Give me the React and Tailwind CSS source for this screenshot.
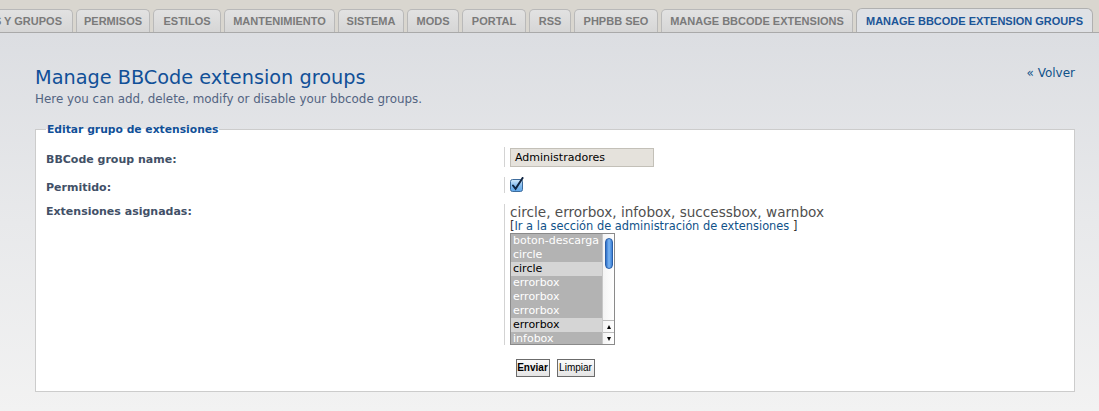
import React from 'react';

const tabs = [
  { label: 'USUARIOS Y GRUPOS', w: 'w-[150px]', clip: true },
  { label: 'PERMISOS', w: 'w-[74px]' },
  { label: 'ESTILOS', w: 'w-[68px]' },
  { label: 'MANTENIMIENTO', w: 'w-[111px]' },
  { label: 'SISTEMA', w: 'w-[66px]' },
  { label: 'MODS', w: 'w-[52px]' },
  { label: 'PORTAL', w: 'w-[64px]' },
  { label: 'RSS', w: 'w-[42px]' },
  { label: 'PHPBB SEO', w: 'w-[84px]' },
  { label: 'MANAGE BBCODE EXTENSIONS', w: 'w-[192px]' },
];

const options = [
  { label: 'boton-descarga', sel: true },
  { label: 'circle', sel: true },
  { label: 'circle', sel: false },
  { label: 'errorbox', sel: true },
  { label: 'errorbox', sel: true },
  { label: 'errorbox', sel: true },
  { label: 'errorbox', sel: false },
  { label: 'infobox', sel: true },
];

const CheckedBox = () => (
  <svg width="14" height="15" viewBox="0 0 14 15">
    <defs>
      <linearGradient id="cbfill" x1="0" y1="0" x2="0" y2="1">
        <stop offset="0" stopColor="#d6ebfc" />
        <stop offset="0.5" stopColor="#86bdef" />
        <stop offset="1" stopColor="#5ea6ea" />
      </linearGradient>
    </defs>
    <rect x="0.5" y="2.5" width="12" height="12" rx="2" fill="url(#cbfill)" stroke="#3e6c9c" />
    <path d="M3 8.5 L5.6 11.8 L12.6 1" stroke="#0f2441" strokeWidth="2" fill="none" strokeLinecap="round" />
  </svg>
);

const ListBox = () => (
  <div className="mt-[1px] flex w-[105px] h-[112px] border border-[#8a8a8a] overflow-hidden bg-white">
    <div className="flex-1 flex flex-col">
      {options.map((o, i) => (
        <div
          key={i}
          className={`h-[14px] shrink-0 pl-[2px] text-[11px] leading-[14px] ${
            o.sel ? 'bg-[#b3b3b3] text-white' : 'bg-[#d5d5d5] text-black'
          }`}
        >
          {o.label}
        </div>
      ))}
    </div>
    {/* scrollbar */}
    <div className="w-[12px] flex flex-col border-l border-[#c8c8c8] bg-gradient-to-r from-[#f4f4f4] to-[#ffffff]">
      <div className="flex-1 pt-[4px] flex justify-center">
        <div className="w-[8px] h-[31px] rounded-full bg-gradient-to-r from-[#2d6fc9] via-[#7db7f3] to-[#3a7fd6] border border-[#2a5fa8]" />
      </div>
      <div className="h-[12px] border-t border-[#bbb] flex items-center justify-center">
        <div className="w-0 h-0 border-l-[2.5px] border-r-[2.5px] border-b-[4px] border-l-transparent border-r-transparent border-b-black" />
      </div>
      <div className="h-[12px] border-t border-[#bbb] flex items-center justify-center">
        <div className="w-0 h-0 border-l-[2.5px] border-r-[2.5px] border-t-[4px] border-l-transparent border-r-transparent border-t-black" />
      </div>
    </div>
  </div>
);

export default function App() {
  return (
    <div className="w-full h-[411px] overflow-hidden flex flex-col bg-[#f2f2f2] font-['DejaVu_Sans',sans-serif]">
      {/* Tabs */}
      <div className="h-[33px] shrink-0 bg-[#d9d6cf] border-b border-[#a9a9a9] flex items-end justify-end gap-[3px] pr-[6px] overflow-hidden font-['Liberation_Sans',Arial,sans-serif] text-[11px] font-bold">
        {tabs.map((t) => (
          <div
            key={t.label}
            className={`${t.w} shrink-0 h-[23px] flex items-center ${
              t.clip ? 'justify-end pr-[10px]' : 'justify-center'
            } rounded-t-[5px] border border-b-0 border-[#b9b9b9] bg-gradient-to-b from-[#e2e2e2] to-[#d6d6d6] text-[#7a7a7a] whitespace-nowrap`}
          >
            {t.label}
          </div>
        ))}
        <div className="w-[237px] shrink-0 h-[25px] -mb-px flex items-center justify-center rounded-t-[6px] border border-b-0 border-[#b0b0b0] bg-[#dfe1e5] text-[#1b5597] whitespace-nowrap">
          MANAGE BBCODE EXTENSION GROUPS
        </div>
      </div>

      {/* Main */}
      <div className="flex-1 bg-gradient-to-b from-[#dcdee2] via-[#e8e9eb] to-[#f2f2f2] pl-[35px] pr-[24px] pt-[33px]">
        <div className="flex justify-between items-start">
          <div>
            <h1 className="text-[19.3px] leading-[24px] text-[#115098]">Manage BBCode extension groups</h1>
            <p className="mt-[2px] text-[11.9px] leading-[14px] text-[#536482]">
              Here you can add, delete, modify or disable your bbcode groups.
            </p>
          </div>
          <a className="text-[12px] leading-[14px] text-[#105289] whitespace-nowrap">« Volver</a>
        </div>

        <fieldset className="mt-[16px] border border-[#cccccc] bg-white px-[10px] pb-[14px]">
          <legend className="px-px text-[10.75px] leading-[15px] font-bold text-[#115098]">
            Editar grupo de extensiones
          </legend>

          <div className="mt-[10px] flex">
            <div className="w-[458px] pt-[6px] text-[11px] leading-[14px] font-bold text-[#425067]">
              BBCode group name:
            </div>
            <div className="border-l border-[#d3d3d3] pl-[5px] h-[20px]">
              <div className="mt-[1px] w-[144px] h-[19px] border border-[#c3c0b8] bg-[#e5e2dc] px-[4px] text-[11px] leading-[17px] text-black">
                Administradores
              </div>
            </div>
          </div>

          <div className="mt-[10px] flex">
            <div className="w-[458px] pt-[4px] text-[11px] leading-[14px] font-bold text-[#425067]">
              Permitido:
            </div>
            <div className="border-l border-[#d3d3d3] pl-[5px] h-[16px]">
              <CheckedBox />
            </div>
          </div>

          <div className="mt-[9px] flex">
            <div className="w-[458px] pt-[1px] text-[11px] leading-[14px] font-bold text-[#425067]">
              Extensiones asignadas:
            </div>
            <div className="border-l border-[#d3d3d3] pl-[5px]">
              <div className="text-[13.6px] leading-[16px] text-[#4f4f4f]">
                circle, errorbox, infobox, successbox, warnbox
              </div>
              <div className="text-[11.4px] leading-[12px] text-[#333]">
                [<a className="text-[#105289]">Ir a la sección de administración de extensiones </a>]
              </div>
              <ListBox />
            </div>
          </div>

          <div className="mt-[14px] flex justify-center gap-[7px] font-['Liberation_Sans',Arial,sans-serif] text-[10px]">
            <button className="h-[18px] w-[34px] border border-[#6b6b6b] bg-gradient-to-b from-[#fbfbfb] to-[#e4e4e4] font-bold text-black leading-[16px]">
              Enviar
            </button>
            <button className="h-[18px] w-[38px] border border-[#6b6b6b] bg-gradient-to-b from-[#fbfbfb] to-[#e4e4e4] text-black leading-[16px]">
              Limpiar
            </button>
          </div>
        </fieldset>
      </div>
    </div>
  );
}
